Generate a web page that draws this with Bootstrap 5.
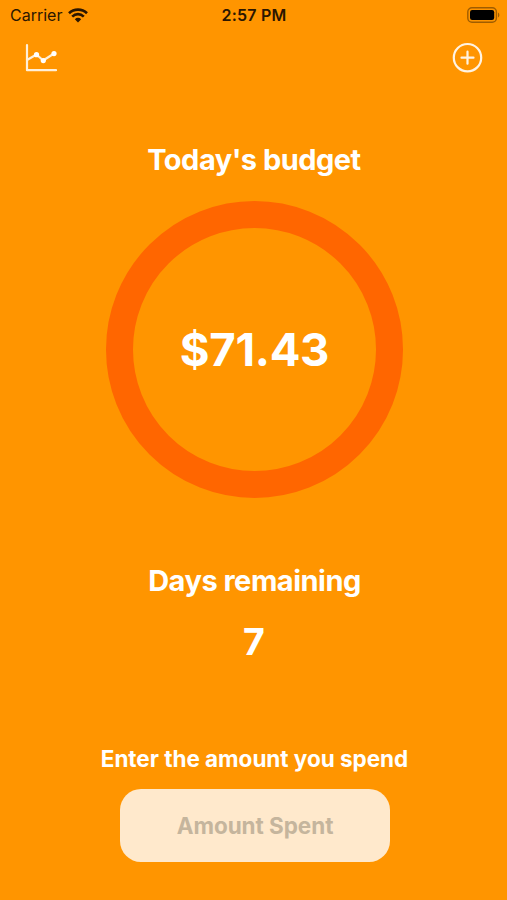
<!DOCTYPE html>
<html lang="en">
<head>
<meta charset="utf-8">
<meta name="viewport" content="width=device-width, initial-scale=1">
<title>Today's budget</title>
<link href="https://cdn.jsdelivr.net/npm/bootstrap@5.3.0/dist/css/bootstrap.min.css" rel="stylesheet">
<style>
body { background: #ff9500; font-family: Inter, "Liberation Sans", sans-serif; }
.screen { height: 900px; width: 507px; }
.status { height: 30px; color: #2b1600; font-size: 16px; line-height: 30px; padding: 0 7px 0 10px; }
.carrier { letter-spacing: 0; margin-right: 6px; }
.clock { font-weight: 600; letter-spacing: .2px; padding-right: 2px; }
.tools { height: 56px; padding: 12px 24px 0; }
.heading { font-size: 29px; line-height: 36px; font-weight: 700; letter-spacing: -.5px; }
.today { margin-top: 56px; padding-left: 1px; }
.ring { width: 297px; height: 297px; border: 27px solid #ff6600; margin: 23px 0 0 2px; }
.money { font-size: 45.5px; line-height: 56px; font-weight: 700; letter-spacing: -.3px; }
.days { margin-top: 65px; padding-left: 2px; }
.count { font-size: 37.5px; line-height: 46px; font-weight: 700; margin-top: 20px; padding-left: 1px; }
.prompt { font-size: 22.5px; line-height: 28px; font-weight: 700; letter-spacing: -.03px; margin-top: 80px; padding-left: 2px; }
.amount, .amount:focus { width: 270px; height: 73px; border-radius: 21px; background: #ffe9cc; color: #c5b59d; margin: 16px 0 0 3px; font-size: 22.5px; font-weight: 700; letter-spacing: -.05px; }
.amount::placeholder { color: #c5b59d; opacity: 1; }
</style>
</head>
<body>
<main class="screen d-flex flex-column align-items-center overflow-hidden text-white">
  <header class="status w-100 row g-0 align-items-center">
    <div class="col d-flex align-items-center">
      <span class="carrier">Carrier</span>
      <svg width="20" height="15" viewBox="0 0 20 15" fill="none" stroke="#2b1600" stroke-width="2.6"><path d="M1 5.3C6 .4 14 .4 19 5.3M4.2 8.6C7.6 5.3 12.4 5.3 15.8 8.6"/><path d="M6.8 11.2C8.7 9.4 11.3 9.4 13.2 11.2L10 14.5Z" fill="#2b1600" stroke="none"/></svg>
    </div>
    <div class="col-auto clock">2:57 PM</div>
    <div class="col d-flex justify-content-end">
      <svg width="33" height="16" viewBox="0 0 33 16"><rect x=".8" y=".8" width="28.6" height="14.4" rx="4.2" fill="none" stroke="#9f5d00" stroke-width="1.4"/><rect x="3" y="3" width="24.2" height="10" rx="2.2" fill="#000"/><path d="M31 5.5c1.8.8 1.8 4.2 0 5z" fill="#9f5d00"/></svg>
    </div>
  </header>
  <nav class="tools w-100 d-flex justify-content-between">
    <svg width="34" height="32" viewBox="0 0 34 32" fill="none" stroke="#ffefd9" stroke-width="2.2" stroke-linecap="round" stroke-linejoin="round"><path d="M3 3V28.2H32"/><path d="M3 18L12.5 12.5L19.2 18.5L30 11.5"/><g fill="#fff" stroke="none"><circle cx="12.5" cy="12.7" r="2.6"/><circle cx="19.3" cy="18.6" r="2.6"/><circle cx="30" cy="11.6" r="2.6"/></g></svg>
    <svg width="31" height="31" viewBox="0 0 31 31" fill="none" stroke="#fff3e2" stroke-width="2.2" stroke-linecap="round"><circle cx="15.5" cy="15.7" r="13.7"/><path d="M15.5 9.7V21.7M9.5 15.7H21.5"/></svg>
  </nav>
  <h1 class="heading today mb-0">Today's budget</h1>
  <div class="ring rounded-circle d-flex align-items-center justify-content-center flex-shrink-0"><span class="money">$71.43</span></div>
  <h2 class="heading days mb-0">Days remaining</h2>
  <div class="count">7</div>
  <label class="prompt" for="spent">Enter the amount you spend</label>
  <input id="spent" class="amount form-control border-0 text-center flex-shrink-0" placeholder="Amount Spent">
</main>
<script src="https://cdn.jsdelivr.net/npm/bootstrap@5.3.0/dist/js/bootstrap.bundle.min.js"></script>
</body>
</html>
